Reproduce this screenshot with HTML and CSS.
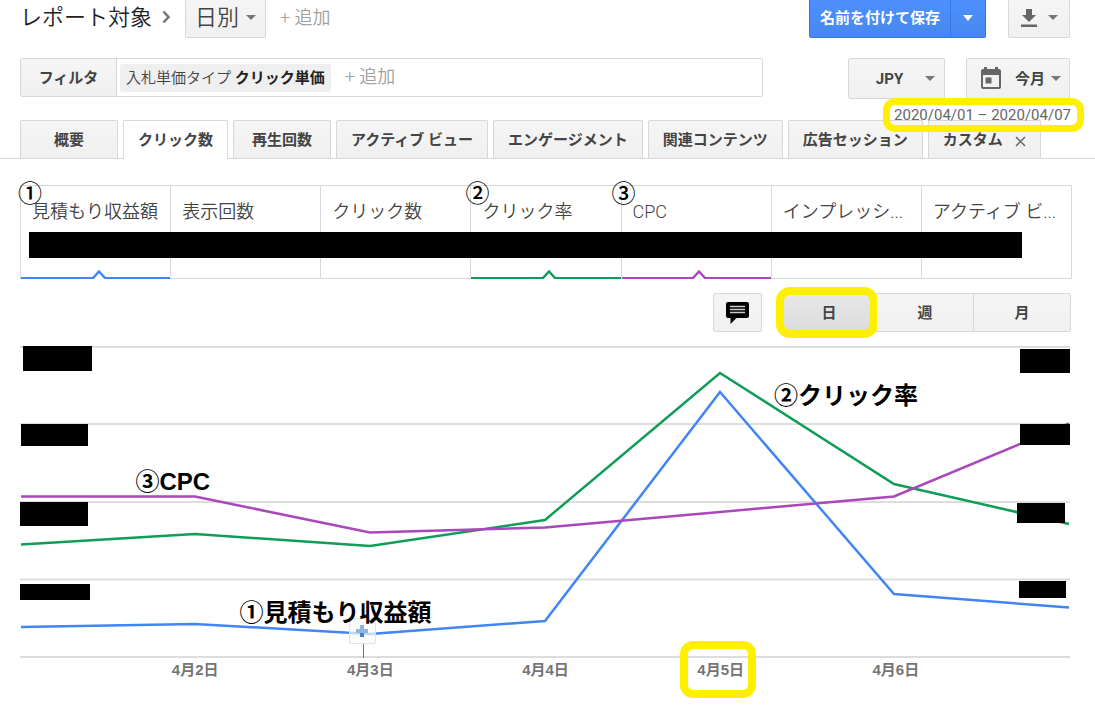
FILE: index.html
```html
<!DOCTYPE html>
<html lang="ja">
<head>
<meta charset="utf-8">
<meta name="viewport" content="width=device-width, initial-scale=1">
<title>レポート</title>
<link rel="stylesheet" href="styles.css">
</head>
<body>
<header class="bar title-bar">
  <h1 class="title">レポート対象</h1>
  <svg class="chevron" width="9" height="14" viewBox="0 0 9 14"><path d="M1.5 1.5L6.5 7l-5 5.500" fill="none" stroke="#777" stroke-width="2.600"/></svg>
  <button class="btn btn-top btn-dimension">日別<span class="caret"></span></button>
  <button class="add add-dimension">+ 追加</button>
  <div class="save-group">
    <button class="save">名前を付けて保存</button>
    <button class="save save-more" aria-label="その他の保存"><span class="caret caret-white"></span></button>
  </div>
  <button class="btn btn-top btn-download" aria-label="ダウンロード">
    <svg width="16" height="18" viewBox="0 0 16 18"><path d="M5 0h6v6h4L8 13 1 6h4zM0 15.500h16V18H0z" fill="#666"/></svg>
    <span class="caret"></span>
  </button>
</header>

<section class="bar filter-bar">
  <div class="filter">
    <button class="filter-label">フィルタ</button>
    <button class="chip">入札単価タイプ <b>クリック単価</b></button>
    <button class="add">+ 追加</button>
  </div>
  <button class="btn btn-currency"><span class="currency">JPY</span><span class="caret"></span></button>
  <div class="period">
    <button class="btn btn-period">
      <svg width="20" height="23" viewBox="0 0 20 23"><path fill="#666" fill-rule="evenodd" d="M3 0h3v2h8V0h3v2h1a2 2 0 0 1 2 2v16a2 2 0 0 1-2 2H2a2 2 0 0 1-2-2V4a2 2 0 0 1 2-2h1zM2 8v12h16V8zM4.500 10.500h6v6h-6z"/></svg>
      <span>今月</span><span class="caret"></span>
    </button>
    <span class="range">2020/04/01 – 2020/04/07</span>
  </div>
</section>

<nav class="tabs">
  <button class="tab">概要</button>
  <button class="tab tab-active">クリック数</button>
  <button class="tab">再生回数</button>
  <button class="tab">アクティブ ビュー</button>
  <button class="tab">エンゲージメント</button>
  <button class="tab">関連コンテンツ</button>
  <button class="tab">広告セッション</button>
  <button class="tab">カスタム<svg class="close" width="11" height="11" viewBox="0 0 11 11"><path d="M1 1l9 9M10 1l-9 9" stroke="#666" stroke-width="1.500"/></svg></button>
</nav>

<main class="content">
  <div class="metrics">
    <div class="metric blue"><span class="num">①</span>見積もり収益額<svg class="notch" width="18" height="10" viewBox="0 0 18 10"><path class="notch-fill" d="M2 10L9 3l7 7z"/><path class="notch-line" d="M1 9.500h1.500L9 2.500l6.500 7H17"/></svg></div>
    <div class="metric">表示回数</div>
    <div class="metric">クリック数</div>
    <div class="metric green"><span class="num">②</span>クリック率<svg class="notch" width="18" height="10" viewBox="0 0 18 10"><path class="notch-fill" d="M2 10L9 3l7 7z"/><path class="notch-line" d="M1 9.500h1.500L9 2.500l6.500 7H17"/></svg></div>
    <div class="metric purple"><span class="num">③</span>CPC<svg class="notch" width="18" height="10" viewBox="0 0 18 10"><path class="notch-fill" d="M2 10L9 3l7 7z"/><path class="notch-line" d="M1 9.500h1.500L9 2.500l6.500 7H17"/></svg></div>
    <div class="metric">インプレッシ...</div>
    <div class="metric">アクティブ ビ...</div>
    <div class="mask mask-metrics"></div>
  </div>

  <div class="chart-tools">
    <button class="btn btn-note" aria-label="メモ">
      <svg width="23" height="22" viewBox="0 0 23 22"><path d="M2 0h19a2 2 0 0 1 2 2v12a2 2 0 0 1-2 2H10.500L4.500 22v-6H2a2 2 0 0 1-2-2V2a2 2 0 0 1 2-2z" fill="#000"/><path d="M4 4.500h15M4 7.500h15M4 10.500h15" stroke="#ccc" stroke-width="1.500"/></svg>
    </button>
    <div class="segments">
      <button class="segment segment-on">日</button>
      <button class="segment">週</button>
      <button class="segment">月</button>
    </div>
  </div>

  <div class="chart">
    <svg class="plot" viewBox="0 0 1050 310" preserveAspectRatio="none">
      <path class="grid" d="M0 0H1050M0 77H1050M0 155H1050M0 232.500H1050M0 310H1050"/>
      <polyline class="line line-blue" points="1,280 175,277 350,287 525,274 700,45 874,247 1049,260.500"/>
      <polyline class="line line-green" points="1,197.500 175,187 350,199 525,173 700,26 874,137 1049,177"/>
      <polyline class="line line-purple" points="1,149.500 175,149.500 350,185.500 525,180.500 700,165 874,149.500 1049,76.500"/>
    </svg>
    <div class="mask left-1"></div>
    <div class="mask left-2"></div>
    <div class="mask left-3"></div>
    <div class="mask left-4"></div>
    <div class="mask right-1"></div>
    <div class="mask right-2"></div>
    <div class="mask right-3"></div>
    <div class="mask right-4"></div>
    <div class="marker"><svg width="12" height="12" viewBox="0 0 12 12"><path d="M6 0v12M0 6h12" stroke="#8fb4e0" stroke-width="4"/><path d="M4 8h4v4H4z" fill="#4a80c8"/></svg></div>
    <span class="note note-revenue">①見積もり収益額</span>
    <span class="note note-ctr">②クリック率</span>
    <span class="note note-cpc">③CPC</span>
  </div>
  <div class="axis">
    <span class="tick">4月2日</span>
    <span class="tick">4月3日</span>
    <span class="tick">4月4日</span>
    <span class="tick tick-marked">4月5日</span>
    <span class="tick">4月6日</span>
  </div>
</main>
</body>
</html>
```
FILE: styles.css
```css
* { box-sizing: border-box; }

body {
  margin: 0;
  background: #fff;
  color: #444;
  font-family: Roboto, "Noto Sans CJK JP", sans-serif;
  font-size: 15px;
  line-height: 20px;
}

button {
  margin: 0;
  padding: 0;
  border: 0;
  background: none;
  color: inherit;
  font: inherit;
  white-space: nowrap;
  cursor: pointer;
}

svg { display: block; flex: none; }

.bar {
  display: flex;
  padding: 0 25px 0 20px;
}

.title-bar { height: 38px; align-items: center; }

.title {
  margin: 0;
  padding-bottom: 2px;
  color: #222;
  font-size: 22px;
  font-weight: 350;
  line-height: 32px;
  white-space: nowrap;
}

.chevron { margin: 0 14px 4px 10px; }

.btn {
  display: flex;
  align-items: center;
  justify-content: center;
  border: 1px solid #d8d8d8;
  border-radius: 2px;
  background: linear-gradient(#f5f5f5, #f0f0f0);
  font-weight: 700;
}

.btn-top {
  height: 38px;
  padding-bottom: 2px;
  border-top: 0;
  border-radius: 0 0 2px 2px;
}

.caret {
  flex: none;
  border: 5px solid transparent;
  border-top-color: #777;
  border-bottom: 0;
}

.caret-white { border-top: 6px solid #fff; }

.btn-dimension {
  gap: 7px;
  width: 81px;
  font-size: 22px;
  font-weight: 350;
}

.add {
  padding: 0 14px 2px;
  color: #a0a0a0;
  font-size: 18px;
  font-weight: 350;
}

.save-group { display: flex; margin-left: auto; }

.save {
  display: flex;
  align-items: center;
  justify-content: center;
  height: 38px;
  padding: 0 10px 2px;
  border: 1px solid #3079ed;
  border-top: 0;
  border-radius: 0 0 0 2px;
  background: linear-gradient(#4d90fe, #4787ed);
  color: #fff;
  font-weight: 700;
}

.save-more {
  width: 35px;
  border-left: 0;
  border-radius: 0 0 2px 0;
}

.btn-download { gap: 11px; width: 62px; margin-left: 22px; }

.filter-bar { margin-top: 20px; align-items: flex-start; }

.filter {
  display: flex;
  flex: 1;
  align-items: center;
  height: 39px;
  margin-right: 85px;
  border: 1px solid #d8d8d8;
  border-radius: 2px;
}

.filter-label {
  align-self: stretch;
  width: 96px;
  border-right: 1px solid #d8d8d8;
  background: linear-gradient(#f5f5f5, #f0f0f0);
  font-weight: 700;
}

.chip {
  height: 28px;
  margin-left: 3px;
  padding: 0 6px;
  border-radius: 3px;
  background: #efefef;
  font-weight: 350;
}

.chip b { color: #222; font-weight: 700; }

.btn-currency { gap: 22px; width: 97px; height: 41px; margin-right: 21px; padding-left: 18px; }

.period { position: relative; }

.btn-period { gap: 6px; width: 104px; height: 41px; padding-left: 6px; }

.btn-period svg { margin-right: 8px; }

.range {
  position: absolute;
  z-index: 2;
  top: 40px;
  right: -14px;
  padding: 0 6px 0 4px;
  border: 7px solid #fff000;
  border-radius: 12px;
  color: #666;
  white-space: nowrap;
}

.tabs {
  display: flex;
  gap: 5px;
  margin-top: 21px;
  padding: 0 20px;
  border-bottom: 1px solid #d8d8d8;
}

.tab {
  display: flex;
  align-items: center;
  justify-content: center;
  min-width: 98px;
  height: 38px;
  padding: 0 14px;
  border: 1px solid #d8d8d8;
  border-bottom: 0;
  border-radius: 2px 2px 0 0;
  background: linear-gradient(#f5f5f5, #f0f0f0);
  font-weight: 700;
}

.tab-active { height: 39px; margin-bottom: -1px; background: #fff; }

.close { margin: 4px 0 0 12px; }

.content { padding: 26px 24px 0 20px; }

.metrics {
  position: relative;
  display: grid;
  grid-template-columns: repeat(7, 1fr);
  margin-right: -1px;
  border: 1px solid #d8d8d8;
  border-left: 0;
}

.metric {
  position: relative;
  height: 92px;
  padding: 16px 0 0 11px;
  border-left: 1px solid #d8d8d8;
  font-size: 18px;
  font-weight: 350;
  white-space: nowrap;
}

.blue { --series: #4285f4; }
.green { --series: #0f9d58; }
.purple { --series: #ab47bc; }

.blue::after,
.green::after,
.purple::after {
  content: "";
  position: absolute;
  right: 0;
  bottom: -1px;
  left: 0;
  height: 2px;
  background: var(--series);
}

.notch {
  position: absolute;
  z-index: 1;
  bottom: -1px;
  left: calc(50% - 6px);
}

.notch-fill { fill: #fff; }
.notch-line { fill: none; stroke: var(--series); stroke-width: 2.5; }

.num {
  position: absolute;
  top: -4px;
  left: -3px;
  color: #000;
  font-family: "Noto Sans CJK JP", sans-serif;
  font-size: 24px;
  font-weight: 500;
  line-height: 20px;
}

.green .num { left: -6px; }
.purple .num { left: -10px; }

.mask { position: absolute; background: #000; }
.mask-metrics { top: 46px; right: 49px; left: 9px; height: 26px; }

.chart-tools {
  display: flex;
  justify-content: flex-end;
  gap: 18px;
  margin-top: 14px;
}

.btn-note { width: 49px; height: 39px; }

.segments {
  display: flex;
  width: 291px;
  border: 1px solid #d8d8d8;
  border-radius: 2px;
}

.segment {
  position: relative;
  flex: 1;
  height: 37px;
  background: linear-gradient(#f5f5f5, #f0f0f0);
  font-weight: 700;
}

.segment:last-child { border-left: 1px solid #d8d8d8; }
.segment-on { background: linear-gradient(#e8e8e8, #dcdcdc); }

.segment-on::after {
  content: "";
  position: absolute;
  inset: -7px -1px -7px -5px;
  border: 8px solid #fff000;
  border-radius: 14px;
}

.chart {
  position: relative;
  height: 310px;
  margin: 15px 1px 0 0;
}

.plot { width: 100%; height: 100%; overflow: visible; }
.grid { fill: none; stroke: #ddd; stroke-width: 2; vector-effect: non-scaling-stroke; }
.line { fill: none; stroke-width: 2.5; vector-effect: non-scaling-stroke; }
.line-blue { stroke: #4285f4; }
.line-green { stroke: #0f9d58; }
.line-purple { stroke: #ab47bc; }

.left-1 { top: -1px; left: 3px; width: 69px; height: 25px; }
.left-2 { top: 77px; left: 1px; width: 67px; height: 22px; }
.left-3 { top: 155px; left: 0; width: 68px; height: 24px; }
.left-4 { top: 237px; left: 0; width: 70px; height: 16px; }
.right-1 { top: 2px; right: 0; width: 50px; height: 24px; }
.right-2 { top: 77px; right: 0; width: 50px; height: 21px; }
.right-3 { top: 156px; right: 5px; width: 48px; height: 20px; }
.right-4 { top: 234px; right: 4px; width: 47px; height: 17px; }

.note {
  position: absolute;
  color: #000;
  font-family: "Liberation Sans", "Noto Sans CJK JP", sans-serif;
  font-size: 24px;
  font-weight: 700;
  line-height: 36px;
  white-space: nowrap;
}

.note-revenue { top: 248px; left: 20.9%; }
.note-ctr { top: 31px; left: 71.8%; }
.note-cpc { top: 117px; left: 11%; }

.marker {
  position: absolute;
  top: 271px;
  left: 31.3%;
  display: grid;
  place-items: center;
  width: 27px;
  height: 26px;
  border: 1px solid #e4e4e4;
  border-radius: 2px;
  background: rgba(250, 250, 250, 0.7);
}

.marker::after {
  content: "";
  position: absolute;
  top: 25px;
  left: 13px;
  height: 14px;
  border-left: 1px solid #777;
}

.axis {
  display: grid;
  grid-template-columns: repeat(5, 1fr);
  justify-items: center;
  padding: 3px calc(100% / 12) 24px;
  color: #757575;
  font-family: "Liberation Sans", "Noto Sans CJK JP", sans-serif;
  font-weight: 700;
}

.tick { position: relative; }

.tick-marked::after {
  content: "";
  position: absolute;
  inset: -19px -12px -18px -17px;
  border: 8px solid #fff000;
  border-radius: 13px;
}
```
